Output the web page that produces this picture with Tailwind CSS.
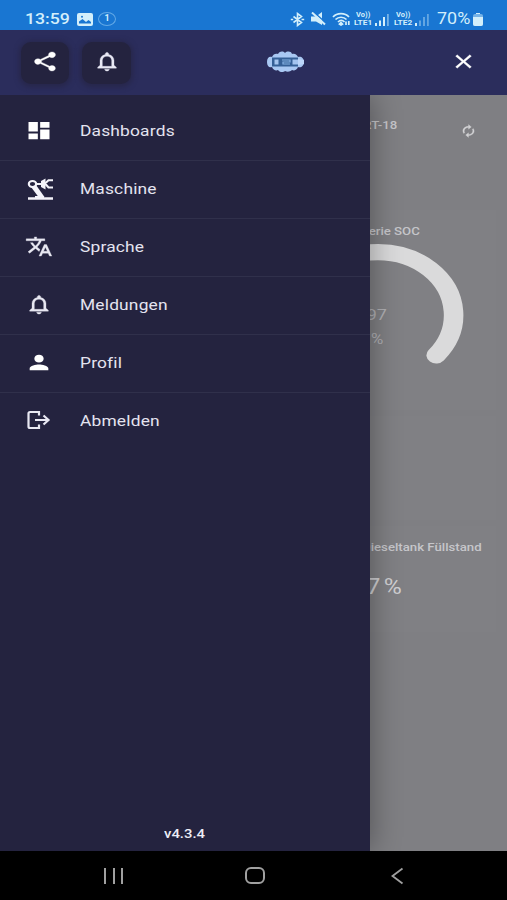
<!DOCTYPE html>
<html lang="de">
<head>
<meta charset="utf-8">
<meta name="viewport" content="width=device-width, initial-scale=1">
<title>Menü</title>
<script src="https://cdn.jsdelivr.net/npm/@tailwindcss/browser@4"></script>
</head>
<body class="bg-black">
<svg class="hidden">
  <symbol id="bell" viewBox="0 0 24 24" preserveAspectRatio="none"><path d="M12 22c1.1 0 2-.9 2-2h-4c0 1.1.89 2 2 2zm6-6v-5c0-3.07-1.64-5.64-4.5-6.32V4c0-.83-.67-1.5-1.5-1.5s-1.5.67-1.5 1.5v.68C7.63 5.36 6 7.92 6 11v5l-2 2v1h16v-1l-2-2zm-2 1H8v-6c0-2.48 1.51-4.5 4-4.5s4 2.02 4 4.5v6z"/></symbol>
</svg>
<div class="flex h-[900px] w-[507px] flex-col overflow-hidden font-['Roboto','Noto_Sans',sans-serif] text-white">

  <!-- Status bar -->
  <div class="flex h-[30px] shrink-0 items-center bg-[#1976d2] pl-[25px] pt-[8px] text-[#d3effb]">
    <div class="w-[52px] text-[15px] font-medium leading-4"><span class="inline-block origin-left scale-x-[1.180]">13:59</span></div>
    <svg class="h-[13px] w-[16px]" viewBox="0 0 16 13"><rect width="16" height="13" rx="2" fill="currentColor"/><path d="M2 10.500V8.500L5.500 6l3.500 3 2.500-2 2.500 2v1.500z" fill="#1976d2"/><circle cx="5" cy="3.800" r="1" fill="#1976d2"/></svg>
    <div class="ml-[5px] flex h-[14px] w-[18px] items-center justify-center rounded-[50%] border border-[#63a9e6] text-[9px] font-bold">1</div>
    <svg class="ml-[174px] h-[15px] w-[15px]" viewBox="0 0 15 15" fill="none" stroke="currentColor" stroke-width="1.600"><path d="M3.500 4.500l8 6L7.500 13.500v-12l4 3-8 6M.8 7.500h2.400M11.500 7.500h2.700"/></svg>
    <svg class="ml-[6px] h-[14px] w-[15px]" viewBox="0 0 15 14"><path d="M0 4.500h5L11 0v13L5 9.500H0z" fill="currentColor"/><path d="M2.500 0l12.500 11" stroke="#1976d2" stroke-width="1.500"/><path d="M1 .5l13 12" stroke="currentColor" stroke-width="2"/></svg>
    <svg class="ml-[6px] h-[14px] w-[19px]" viewBox="0 0 19 14" fill="none" stroke="currentColor" stroke-width="1.700"><path d="M1 5c4-4.500 12-4.500 16 0M3.500 7.500c3-3 8-3 11 0M6 10c2-2 4.500-2 6.500 0"/><path d="M9 10.500l1.500 1.500L9 13l-1.500-1zM14 13V9.500M16.800 9v4"/></svg>
    <div class="ml-[2px] flex w-[20px] flex-col items-center text-[6.500px] font-bold leading-[8px]"><span class="scale-x-[1.150]">Vo))</span><span class="scale-x-[1.280]">LTE1</span></div>
    <svg class="ml-[2px] h-[13px] w-[15px]" viewBox="0 0 15 13" fill="currentColor"><path d="M0 10h2v3H0zM4 7.500h2V13H4zM8 4h2v9H8z"/><path d="M12 1h1.800v12H12z" opacity=".5"/></svg>
    <div class="ml-[3px] flex w-[20px] flex-col items-center text-[6.500px] font-bold leading-[8px]"><span class="scale-x-[1.150]">Vo))</span><span class="scale-x-[1.280]">LTE2</span></div>
    <svg class="ml-[2px] h-[13px] w-[15px]" viewBox="0 0 15 13" fill="currentColor"><path d="M0 10h2v3H0z"/><path d="M4 7.500h2V13H4zM8 4h2v9H8zM12 1h1.800v12H12z" opacity=".4"/></svg>
    <div class="ml-[7px] w-[36px] text-[16px] leading-4"><span class="inline-block origin-left scale-x-[1.120]">70%</span></div>
    <svg class="h-[13px] w-[10px]" viewBox="0 0 10 13" fill="currentColor"><path d="M3 0h4v1H3z"/><rect y="1" width="10" height="12" rx="2" opacity=".5"/><path d="M0 4h10v7a2 2 0 0 1-2 2H2a2 2 0 0 1-2-2z"/></svg>
  </div>

  <!-- App bar -->
  <header class="flex h-[65px] shrink-0 items-center bg-[#2b2d5c] pl-[21px]">
    <div class="flex h-[42px] w-[48px] items-center justify-center rounded-[10px] bg-[#24233f] pb-[3px] shadow-[0_1px_5px_2px_#24233f99]">
      <svg class="h-[23px] w-[28px]" viewBox="0 0 24 24" preserveAspectRatio="none" fill="#fff" stroke="#fff" stroke-width=".3"><path d="M18 16.080c-.76 0-1.440.3-1.960.77L8.910 12.700c.05-.23.09-.46.09-.7s-.04-.47-.09-.7l7.050-4.110c.54.5 1.250.81 2.040.81 1.660 0 3-1.340 3-3s-1.340-3-3-3-3 1.340-3 3c0 .24.04.47.09.7L8.040 9.810C7.500 9.310 6.790 9 6 9c-1.660 0-3 1.340-3 3s1.340 3 3 3c.79 0 1.500-.31 2.040-.81l7.120 4.160c-.05.21-.08.43-.08.65 0 1.610 1.310 2.920 2.920 2.920s2.920-1.310 2.920-2.920-1.310-2.920-2.920-2.920z"/></svg>
    </div>
    <div class="ml-[13px] flex h-[42px] w-[49px] items-center justify-center rounded-[10px] bg-[#24233f] pb-[3px] shadow-[0_1px_5px_2px_#24233f99]">
      <svg class="h-[23px] w-[28px]" fill="#e8e8f4" stroke="#e8e8f4" stroke-width=".3"><use href="#bell"/></svg>
    </div>
    <svg class="mb-[2px] ml-[135px] h-[22px] w-[39px]" viewBox="0 0 39 22">
      <path d="M1 11c0-4 2-6 5-5 1-3 4-4 6-3 2-3 5-3 7-1 2-2 6-2 7 1 3-1 5 1 6 3 3-1 6 1 6 5s-3 6-6 5c-1 3-4 4-6 3-2 2-5 2-7 1-2 2-6 1-7-1-2 1-5 0-6-3-3 1-5-1-5-5z" fill="#a9c8f3"/>
      <path d="M6 6.500h26v9H6z" fill="#356097"/>
      <path d="M8.500 8.500h4v5h-4zM26.500 8.500H33v5h-6.500z" fill="#a4c4ef"/>
      <path d="M16 9h8v2h-7v2h7" fill="none" stroke="#86b1e4" stroke-width="1.200"/>
      <path d="M32 8l6 1v4l-6 1z" fill="#bdd6fa"/>
    </svg>
    <svg class="mb-[2px] ml-[145px] h-[23px] w-[27px]" viewBox="0 0 24 24" preserveAspectRatio="none" fill="#fff" stroke="#fff" stroke-width=".3"><path d="M19 6.410L17.590 5 12 10.590 6.410 5 5 6.410 10.590 12 5 17.590 6.410 19 12 13.410 17.590 19 19 17.590 13.410 12z"/></svg>
  </header>

  <div class="relative flex h-[756px] shrink-0 overflow-hidden">
    <!-- Navigation drawer -->
    <nav class="z-10 flex w-[370px] shrink-0 flex-col bg-[#24233f] pt-[8px] text-[14px] tracking-[.15px] text-[#e4e4f0] shadow-[2px_0_28px_#00000055]">
      <a class="flex h-[58px] items-center border-b border-[#30304b] pl-[25px]"><svg class="mb-[2px] h-[23px] w-[28px]" viewBox="0 0 24 24" preserveAspectRatio="none" fill="#fff"><path d="M3 13h8V3H3v10zm0 8h8v-6H3v6zm10 0h8V11h-8v10zm0-18v6h8V3h-8z"/></svg><span class="ml-[27px] origin-left scale-x-[1.240]">Dashboards</span></a>
      <a class="flex h-[58px] items-center border-b border-[#30304b] pl-[25px]"><svg class="h-[23px] w-[28px]" viewBox="0 0 28 23" fill="none" stroke="#f4f4fa" stroke-width="2.100"><ellipse cx="7.500" cy="6" rx="3.700" ry="3"/><path d="M11 6h6M28 2.200h-4.500L20 5.500l3.500 4H28"/><path d="M16 3l4.500-2.500v11L16 9z" fill="#f4f4fa" stroke="none"/><path d="M6 9l5-2 8.500 12h-6z" fill="#f4f4fa" stroke="none"/><path d="M3 21.800v-2.500h7V18h9v1.300h9v2.500z" fill="#f4f4fa" stroke="none"/></svg><span class="ml-[27px] origin-left scale-x-[1.240]">Maschine</span></a>
      <a class="flex h-[58px] items-center border-b border-[#30304b] pl-[25px]"><svg class="mb-[2px] h-[23px] w-[28px]" viewBox="0 0 24 24" preserveAspectRatio="none" fill="#e8e8f2" stroke="#e8e8f2" stroke-width=".3"><path d="M12.870 15.070l-2.540-2.510.03-.03c1.740-1.940 2.980-4.170 3.710-6.530H17V4h-7V2H8v2H1v1.990h11.170C11.500 7.920 10.440 9.750 9 11.350 8.070 10.320 7.300 9.190 6.690 8h-2c.73 1.630 1.730 3.170 2.980 4.560l-5.090 5.020L4 19l5-5 3.110 3.110.76-2.040zM18.500 10h-2L12 22h2l1.120-3h4.750L21 22h2l-4.500-12zm-2.620 7l1.620-4.330L19.120 17h-3.240z"/></svg><span class="ml-[27px] origin-left scale-x-[1.240]">Sprache</span></a>
      <a class="flex h-[58px] items-center border-b border-[#30304b] pl-[25px]"><svg class="mb-[2px] h-[23px] w-[28px]" fill="#e8e8f2" stroke="#e8e8f2" stroke-width=".3"><use href="#bell"/></svg><span class="ml-[27px] origin-left scale-x-[1.240]">Meldungen</span></a>
      <a class="flex h-[58px] items-center border-b border-[#30304b] pl-[25px]"><svg class="mb-[3px] h-[23px] w-[28px]" viewBox="0 0 24 24" preserveAspectRatio="none" fill="#fff"><path d="M12 12c2.210 0 4-1.790 4-4s-1.790-4-4-4-4 1.790-4 4 1.790 4 4 4zm0 2c-2.670 0-8 1.340-8 4v2h16v-2c0-2.660-5.330-4-8-4z"/></svg><span class="ml-[27px] origin-left scale-x-[1.240]">Profil</span></a>
      <a class="flex h-[57px] items-center pl-[25px]"><svg class="mb-[2px] h-[23px] w-[28px]" viewBox="0 0 28 23" fill="none" stroke="#e8e8f2" stroke-width="2.200"><path d="M14 6.500V3H5a1.500 1.500 0 0 0-1.500 1.500v13A1.500 1.500 0 0 0 5 19h9v-3.500M10 11h13M18.500 6.500l5 4.500-5 4.500"/></svg><span class="ml-[27px] origin-left scale-x-[1.240]">Abmelden</span></a>
      <div class="mb-[9px] mt-auto text-center text-[12px] font-medium leading-4 tracking-normal text-[#ededf6]"><span class="inline-block scale-x-[1.240]">v4.3.4</span></div>
    </nav>

    <!-- Dimmed dashboard behind the drawer -->
    <main class="flex flex-1 flex-col bg-[#7f7f83] text-[#c6c6ca]">
      <div class="flex h-[115px] items-start pt-[23px]">
        <div class="flex w-[27px] justify-end whitespace-nowrap text-[11px] font-medium leading-4"><span class="origin-right scale-x-[1.200]">RT-18</span></div>
        <svg class="ml-[63px] mt-[6px] h-[14px] w-[17px]" viewBox="0 0 24 24" preserveAspectRatio="none" fill="#d2d2d5" stroke="#d2d2d5" stroke-width=".4"><path d="M12 6v3l4-4-4-4v3c-4.420 0-8 3.580-8 8 0 1.570.46 3.030 1.240 4.260L6.700 14.800c-.45-.83-.7-1.790-.7-2.800 0-3.310 2.690-6 6-6zm6.760 1.740L17.300 9.200c.44.84.7 1.790.7 2.800 0 3.310-2.690 6-6 6v-3l-4 4 4 4v-3c4.420 0 8-3.580 8-8 0-1.570-.46-3.030-1.240-4.260z"/></svg>
      </div>
      <section class="mr-[11px] h-[200px] bg-[#808084] pt-[14px]">
        <div class="flex w-[50px] justify-end whitespace-nowrap text-[11px] font-medium leading-4"><span class="origin-right scale-x-[1.200]">Batterie SOC</span></div>
        <div class="relative h-[130px]">
          <svg class="h-[130px] w-[126px]" viewBox="0 0 126 130"><g transform="translate(8 75) scale(1.200 1)"><path d="M-48.500 40.300A63 63 0 1 1 48.500 40.300" fill="none" stroke="#dadadb" stroke-width="16.300" stroke-linecap="round"/></g></svg>
          <div class="absolute left-0 top-[65px] flex w-[17px] justify-end whitespace-nowrap text-[15px] leading-5 text-[#b0b0b4]"><span class="origin-right scale-x-[1.200]">97</span></div>
          <div class="absolute left-0 top-[89px] flex w-[13px] justify-end text-[14px] leading-5 text-[#b0b0b4]"><span class="origin-right scale-x-[1.200]">%</span></div>
        </div>
      </section>
      <section class="mr-[11px] mt-[6px] h-[104px] bg-[#808084]"></section>
      <section class="mr-[11px] mt-[6px] h-[106px] bg-[#808084] pt-[14px]">
        <div class="flex w-[112px] justify-end whitespace-nowrap text-[11px] font-medium leading-4"><span class="origin-right scale-x-[1.200]">Dieseltank Füllstand</span></div>
        <div class="mt-[17px] flex w-[32px] justify-end whitespace-nowrap text-[22px] leading-7 text-[#cfcfd2]"><span class="origin-right scale-x-[1.120]">97<span class="ml-[3px]">%</span></span></div>
      </section>
    </main>
  </div>

  <!-- System navigation -->
  <div class="flex h-[49px] shrink-0 items-center bg-black pl-[104px] text-[#a0a0a0]">
    <div class="flex h-[16px] w-[19px] justify-between"><i class="w-[2px] bg-current"></i><i class="w-[2px] bg-current"></i><i class="w-[2px] bg-current"></i></div>
    <div class="ml-[122px] h-[17px] w-[20px] rounded-[6px] border-2 border-current"></div>
    <svg class="ml-[125px] h-[18px] w-[14px]" viewBox="0 0 14 18" fill="none" stroke="currentColor" stroke-width="1.800"><path d="M12.500 1.500L2.500 9l10 7.500"/></svg>
  </div>
</div>
</body>
</html>
